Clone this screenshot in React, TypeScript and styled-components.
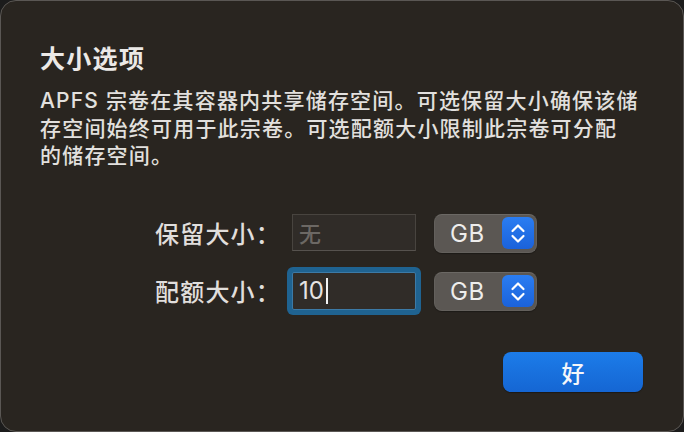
import styled, { createGlobalStyle } from "styled-components";

const GlobalStyle = createGlobalStyle`
  html, body {
    margin: 0;
    padding: 0;
    background: #1c1c1c;
  }
  body {
    font-family: "Inter", "Noto Sans CJK SC", sans-serif;
    -webkit-font-smoothing: antialiased;
  }
`;

const App = () => {
  return (
    <>
      <GlobalStyle />
      <Window>
        <Title>大小选项</Title>
        <Description>
          APFS 宗卷在其容器内共享储存空间。可选保留大小确保该储
          <br />
          存空间始终可用于此宗卷。可选配额大小限制此宗卷可分配
          <br />
          的储存空间。
        </Description>

        <Form>
          <Label>保留大小：</Label>
          <Field $disabled>
            <Placeholder>无</Placeholder>
          </Field>
          <UnitPopup />

          <Label>配额大小：</Label>
          <Field $focused>
            <Value>10</Value>
            <Caret />
          </Field>
          <UnitPopup />
        </Form>

        <Footer>
          <PrimaryButton>好</PrimaryButton>
        </Footer>
      </Window>
    </>
  );
};

const UnitPopup = () => {
  return (
    <Popup>
      <PopupText>GB</PopupText>
      <Stepper>
        <svg width="32" height="32" viewBox="0 0 32 32" fill="none">
          <path
            d="M10.5 14 L16 8.5 L21.5 14"
            stroke="#fff"
            strokeWidth="2.2"
            strokeLinecap="round"
            strokeLinejoin="round"
          />
          <path
            d="M10.5 19 L16 24.5 L21.5 19"
            stroke="#fff"
            strokeWidth="2.2"
            strokeLinecap="round"
            strokeLinejoin="round"
          />
        </svg>
      </Stepper>
    </Popup>
  );
};

export default App;

const Window = styled.div`
  box-sizing: border-box;
  width: 684px;
  height: 432px;
  background: #292520;
  border: 1px solid #5a5754;
  border-radius: 16px;
  padding: 41px 40px 0 39px;
  display: flex;
  flex-direction: column;
  color: #dedcda;
`;

const Title = styled.div`
  font-family: "Noto Sans CJK SC", sans-serif;
  font-size: 25px;
  font-weight: 700;
  line-height: 30px;
  letter-spacing: 1.3px;
  color: #ebe9e7;
`;

const Description = styled.div`
  margin-top: 15px;
  font-size: 21px;
  font-weight: 500;
  line-height: 27.5px;
  letter-spacing: 1.2px;
  white-space: nowrap;
  color: #e2e0de;
`;

const Form = styled.div`
  margin-top: 44px;
  margin-left: 102px;
  display: grid;
  grid-template-columns: 132px 124px 103px;
  grid-template-rows: 39px 39px;
  column-gap: 18px;
  row-gap: 19px;
`;

const Label = styled.div`
  font-family: "Noto Sans CJK SC", sans-serif;
  font-size: 24px;
  font-weight: 500;
  line-height: 37px;
  letter-spacing: 1.2px;
  text-align: right;
  margin-right: -7px;
  white-space: nowrap;
  color: #e0dedc;
`;

const Field = styled.div<{ $disabled?: boolean; $focused?: boolean }>`
  box-sizing: border-box;
  align-self: start;
  height: ${(p) => (p.$focused ? "38px" : "37px")};
  display: flex;
  align-items: center;
  padding-left: 6px;
  background: #302c28;
  border: 1px solid ${(p) => (p.$focused ? "#3c7aa6" : "#48443f")};
  border-bottom-color: ${(p) => (p.$focused ? "#3c7aa6" : "#56524e")};
  border-radius: ${(p) => (p.$focused ? "2px" : "0")};
  box-shadow: ${(p) => (p.$focused ? "0 0 0 5px #1f6391" : "none")};
`;

const Placeholder = styled.span`
  font-family: "Noto Sans CJK SC", sans-serif;
  font-size: 22px;
  font-weight: 500;
  color: #6c6864;
`;

const Value = styled.span`
  font-size: 24px;
  color: #e6e4e2;
  letter-spacing: 0px;
`;

const Caret = styled.span`
  display: inline-block;
  width: 2px;
  height: 26px;
  margin-left: 2px;
  background: #f2f2f2;
`;

const Popup = styled.div`
  box-sizing: border-box;
  height: 39px;
  display: flex;
  align-items: center;
  justify-content: space-between;
  padding: 0 2px 0 15px;
  background: #5b5753;
  border: 1px solid #63605c;
  border-top-color: #6b6864;
  border-radius: 8px;
  box-shadow: 0 1px 1px rgba(0, 0, 0, 0.3);
`;

const PopupText = styled.span`
  font-size: 24px;
  letter-spacing: 0.5px;
  color: #eeedec;
`;

const Stepper = styled.div`
  width: 32px;
  height: 32px;
  border-radius: 6px;
  background: linear-gradient(180deg, #2a7df2 0%, #1b62da 100%);
  display: flex;
  align-items: center;
  justify-content: center;
`;

const Footer = styled.div`
  margin-top: 41px;
  display: flex;
  justify-content: flex-end;
`;

const PrimaryButton = styled.button`
  width: 140px;
  height: 40px;
  border: none;
  border-radius: 8px;
  background: linear-gradient(180deg, #1c7ce9 0%, #1566d3 100%);
  box-shadow: 0 1px 1px rgba(0, 0, 0, 0.35);
  color: #f4f6fa;
  font-family: "Noto Sans CJK SC", sans-serif;
  font-size: 23px;
  font-weight: 500;
  line-height: 40px;
  padding: 0;
  cursor: default;
`;
